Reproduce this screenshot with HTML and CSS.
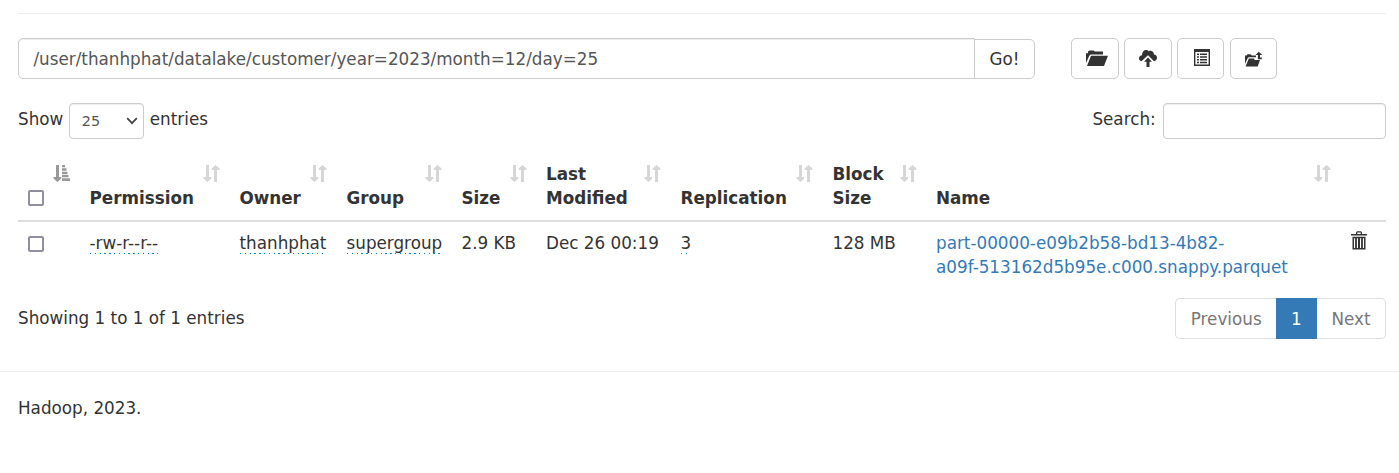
FILE: index.html
```html
<!DOCTYPE html>
<html lang="en">
<head>
<meta charset="utf-8">
<title>Browsing HDFS</title>
<link rel="stylesheet" href="styles.css">
</head>
<body>
<svg class="defs" width="0" height="0">
  <symbol id="sort" viewBox="0 0 17 17"><path d="M3 0h3v12h2.300v1.500L4.500 17 .5 13.500V12H3zM11 17V5H8.700V3.500L12.500 0l4 3.500V5H14v12z"/></symbol>
</svg>
<main class="container">
  <hr class="rule">
  <div class="toolbar">
    <div class="path-group">
      <input class="path" type="text" value="/user/thanhphat/datalake/customer/year=2023/month=12/day=25">
      <button class="go">Go!</button>
    </div>
    <div class="actions">
      <button class="btn" title="Create directory"><svg class="folder" width="22" height="17" viewBox="0 0 22 17"><path d="M0 13V3.200h2V1.600L3.600.6H7.500l1.300 1H17v2.800H4.600L3.300 5.800zM1 16 5 5.800h17L18 16z"/></svg></button>
      <button class="btn" title="Upload files"><svg width="18" height="17" viewBox="0 0 18 17"><path d="M2.500 11.200C.5 10.700 0 9.500 0 8.200 0 6.500 1.300 5.300 3 5.200 3 2 4.800 0 7 0c1.200 0 2 .4 2.700 1.200C12.300-.1 15.100 1.800 14.900 4.500c2 .2 3.100 1.500 3.100 3.200 0 1.800-1.300 3.200-3 3.500L9 5.300z"/><path d="m9 7.500 4 4.300h-2.500V17h-3v-5.200H5z"/></svg></button>
      <button class="btn" title="Cut and paste"><svg class="list" width="16" height="17" viewBox="0 0 16 17"><path fill-rule="evenodd" d="M0 0h16v17H0zM1.400 3v12.400h13.200V3zM3 4.500h2V6H3zm3 0h7V6H6zM3 7.300h2v1.500H3zm3 0h7v1.500H6zM3 10h2v1.500H3zm3 0h7v1.500H6zM3 12.700h2v1.500H3zm3 0h7v1.500H6z"/></svg></button>
      <button class="btn" title="Parent directory"><svg width="18" height="16" viewBox="0 0 18 16"><path d="M0 13V4.500h1.500l1-1.300h3l1.200 1.300H11v1.800H3.500L2.400 7.800zM.6 15.500l3.200-8h5.200c.2 1.100.9 1.600 2 1.600h4L12.700 15.500z"/><path d="M13.700.7 17.400 4H15v2.500h1.800v1.800H12.900V4h-2.400z"/></svg></button>
    </div>
  </div>
  <div class="controls">
    <label class="length">Show <span class="select">25<svg width="12" height="8" viewBox="0 0 12 8"><path d="m1.200 1.200 4.800 5 4.800-5"/></svg></span> entries</label>
    <label class="search">Search: <input type="text"></label>
  </div>
  <table class="files">
    <colgroup><col class="c-check"><col class="c-perm"><col class="c-owner"><col class="c-group"><col class="c-size"><col class="c-date"><col class="c-repl"><col class="c-block"><col class="c-name"><col class="c-trash"></colgroup>
    <thead>
      <tr>
        <th><input type="checkbox" class="check"><svg class="sort active" viewBox="0 0 17 17"><path d="M3 0h3v12h2.300v1.500L4.500 17 .5 13.500V12H3zM9 0h3v2.200H9zM9 3.300h4.500v2.400H9zM9 6.700h5.500v2.500H9zM9 10h6.500v2.300H9zM9 13.300h8V16H9z"/></svg></th>
        <th>Permission<svg class="sort"><use href="#sort"/></svg></th>
        <th>Owner<svg class="sort"><use href="#sort"/></svg></th>
        <th>Group<svg class="sort"><use href="#sort"/></svg></th>
        <th>Size<svg class="sort"><use href="#sort"/></svg></th>
        <th>Last<br>Modified<svg class="sort"><use href="#sort"/></svg></th>
        <th>Replication<svg class="sort"><use href="#sort"/></svg></th>
        <th>Block<br>Size<svg class="sort"><use href="#sort"/></svg></th>
        <th>Name<svg class="sort"><use href="#sort"/></svg></th>
        <th></th>
      </tr>
    </thead>
    <tbody>
      <tr>
        <td><input type="checkbox" class="check"></td>
        <td><span class="editable">-rw-r--r--</span></td>
        <td><span class="editable">thanhphat</span></td>
        <td><span class="editable">supergroup</span></td>
        <td>2.9 KB</td>
        <td>Dec 26 00:19</td>
        <td><span class="editable">3</span></td>
        <td>128 MB</td>
        <td><a class="file" href="#">part-00000-e09b2b58-bd13-4b82-<br>a09f-513162d5b95e.c000.snappy.parquet</a></td>
        <td><svg class="trash" width="16" height="19" viewBox="0 0 16 19"><path fill-rule="evenodd" d="M0 3h5V1.500L6 .3h4l1 1.200V3h5v1.500H0zm6.300 0h3.400V1.500H6.300zM1.500 5.700h13v12.800h-13zm1.500 1.500v9.800h1.100V7.200zm2.900 0v9.800H7V7.200zm3.100 0v9.800h1.100V7.200zm2.900 0v9.800h1.100V7.200z"/></svg></td>
      </tr>
    </tbody>
  </table>
  <div class="summary">
    <div class="info">Showing 1 to 1 of 1 entries</div>
    <div class="pager"><span class="page">Previous</span><span class="page current">1</span><span class="page">Next</span></div>
  </div>
</main>
<footer class="footer">Hadoop, 2023.</footer>
</body>
</html>
```
FILE: styles.css
```css
* { box-sizing: border-box; }
body {
  margin: 0;
  background: #fff;
  color: #333;
  font: 16.8px/24px "DejaVu Sans", sans-serif;
  overflow: hidden;
}
input, button { font: inherit; margin: 0; }
.defs { display: block; }
.container { padding: 13px 13px 0 18px; }
.rule { margin: 0 0 24px; border: 0; border-top: 1px solid #eee; }
.toolbar { display: flex; gap: 36px; height: 41px; }
.path-group { display: flex; align-items: flex-end; width: 1017px; }
.path {
  flex: 1;
  height: 41px;
  padding: 0 14.400px;
  border: 1px solid #ccc;
  border-radius: 5px 0 0 5px;
  box-shadow: inset 0 1px 1px rgba(0, 0, 0, .075);
  color: #555;
  outline: 0;
}
.go {
  width: 61px;
  height: 40px;
  margin-left: -1px;
  padding: 0;
  border: 1px solid #ccc;
  border-radius: 0 5px 5px 0;
  background: #fff;
  color: #333;
}
.actions { display: flex; gap: 5px; }
.btn {
  display: flex;
  align-items: center;
  justify-content: center;
  width: 48px;
  height: 41px;
  padding: 0;
  border: 1px solid #ccc;
  border-radius: 5px;
  background: #fff;
}
.btn:nth-child(n+3) { width: 47px; }
.btn:last-child { margin-left: 1px; }
.btn svg, .trash { display: block; fill: #333; }
.btn .folder { margin-left: 3px; }
.btn .list { margin: 0 0 2px 2px; }
.controls { display: flex; justify-content: space-between; height: 49px; margin-top: 24px; }
.length, .search { display: flex; height: 32px; line-height: 32px; }
.select {
  display: flex;
  align-items: center;
  justify-content: space-between;
  width: 75px;
  height: 36px;
  margin: 0 5.500px 0 6px;
  padding: 0 5px 0 11.500px;
  border: 1px solid #ccc;
  border-radius: 4px;
  box-shadow: inset 0 1px 1px rgba(0, 0, 0, .075);
  color: #555;
  font-size: 14.4px;
}
.select svg { fill: none; stroke: #444; stroke-width: 1.8; }
.search input {
  width: 223px;
  height: 36px;
  margin-left: 7.300px;
  border: 1px solid #ccc;
  border-radius: 4px;
  box-shadow: inset 0 1px 1px rgba(0, 0, 0, .075);
}
.files { width: 1368px; table-layout: fixed; border-collapse: separate; border-spacing: 0; }
.c-check { width: 62px; }
.c-perm { width: 149.5px; }
.c-owner { width: 107px; }
.c-group { width: 115px; }
.c-size { width: 84.5px; }
.c-date { width: 134.5px; }
.c-repl { width: 152px; }
.c-block { width: 103.5px; }
.c-name { width: 414px; }
.c-trash { width: 46px; }
.files th, .files td { padding: 9px 0 10px 10px; text-align: left; white-space: nowrap; }
.files th { position: relative; height: 70px; border-bottom: 2px solid #ddd; vertical-align: bottom; }
.files td { vertical-align: top; padding-bottom: 9px; }
.files th:nth-child(2), .files td:nth-child(2) { padding-left: 9.500px; }
.sort { position: absolute; top: 13px; right: 9.5px; width: 17px; height: 17px; fill: #d6d6d6; }
.sort.active { right: 10px; fill: #999; }
.check {
  appearance: none;
  display: block;
  width: 16px;
  height: 16px;
  margin: 0 0 4px;
  border: 2px solid #8f8f9d;
  border-radius: 2px;
  background: #fff;
}
td .check { margin-top: 5px; }
.editable {
  display: inline-block;
  height: 23px;
  background: repeating-linear-gradient(90deg, #0088cc 0 1.400px, transparent 1.400px 4.800px) left bottom / 100% 1px no-repeat;
}
.file { color: #337ab7; text-decoration: none; }
.trash { margin: 0 0 0 1px; }
.summary { display: flex; justify-content: space-between; margin-top: 10px; }
.info { padding-top: 8px; }
.pager { display: flex; height: 41px; }
.page {
  padding: 8px 14.400px;
  border: 1px solid #ddd;
  color: #777;
}
.page:first-child { border-radius: 5px 0 0 5px; border-right: 0; }
.page:last-child { border-radius: 0 5px 5px 0; border-left: 0; }
.current { padding-left: 14px; border-color: #337ab7; background: #337ab7; color: #fff; }
.footer { height: 101px; margin-top: 32px; padding: 24px 18px; border-top: 1px solid #eee; }
```
